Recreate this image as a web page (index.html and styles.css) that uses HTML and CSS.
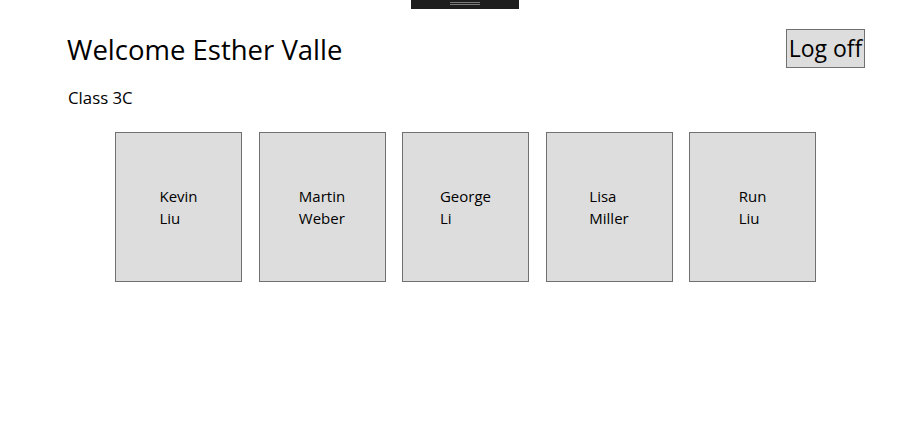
FILE: index.html
```html
<!DOCTYPE html>
<html lang="en">
<head>
<meta charset="utf-8">
<title>Class 3C</title>
<link rel="stylesheet" href="styles.css">
</head>
<body>
<div class="grip"><span class="grip-line"></span><span class="grip-line"></span></div>
<main class="page">
  <header class="header">
    <h1 class="title">Welcome Esther Valle</h1>
    <button class="logoff">Log off</button>
  </header>
  <p class="class-name">Class 3C</p>
  <section class="students">
    <div class="card"><div class="name">Kevin<br>Liu</div></div>
    <div class="card"><div class="name">Martin<br>Weber</div></div>
    <div class="card"><div class="name">George<br>Li</div></div>
    <div class="card"><div class="name">Lisa<br>Miller</div></div>
    <div class="card"><div class="name">Run<br>Liu</div></div>
  </section>
</main>
</body>
</html>
```
FILE: styles.css
```css
html, body {
  margin: 0;
  padding: 0;
  background: #ffffff;
  color: #000000;
  font-family: "Open Sans", "Noto Sans", sans-serif;
}
.grip {
  position: absolute;
  top: 0;
  left: 411px;
  width: 108px;
  height: 9px;
  background: #1e1e1e;
  display: flex;
  flex-direction: column;
  align-items: center;
  padding-top: 2px;
  box-sizing: border-box;
  gap: 1px;
}
.grip-line {
  display: block;
  width: 30px;
  height: 1px;
  background: #7a7a7a;
}
.page {
  padding: 29px 47px 0 66px;
}
.header {
  display: flex;
  justify-content: space-between;
  align-items: flex-start;
}
.title {
  margin: 4px 0 0 1px;
  font-size: 27.5px;
  font-weight: 400;
  line-height: 34px;
}
.logoff {
  margin: 0;
  width: 79px;
  height: 39px;
  padding: 0;
  background: #dddddd;
  border: 1px solid #707070;
  border-radius: 0;
  font-family: inherit;
  font-size: 23px;
  line-height: 37px;
  color: #000;
}
.class-name {
  margin: 20px 0 0 2px;
  font-size: 16.8px;
  line-height: 20px;
}
.students {
  margin-top: 24px;
  display: flex;
  justify-content: center;
  gap: 16.5px;
}
.card {
  width: 127px;
  height: 150px;
  box-sizing: border-box;
  background: #dddddd;
  border: 1px solid #707070;
  display: flex;
  align-items: center;
  justify-content: center;
}
.name {
  font-size: 15px;
  line-height: 22px;
}
```
